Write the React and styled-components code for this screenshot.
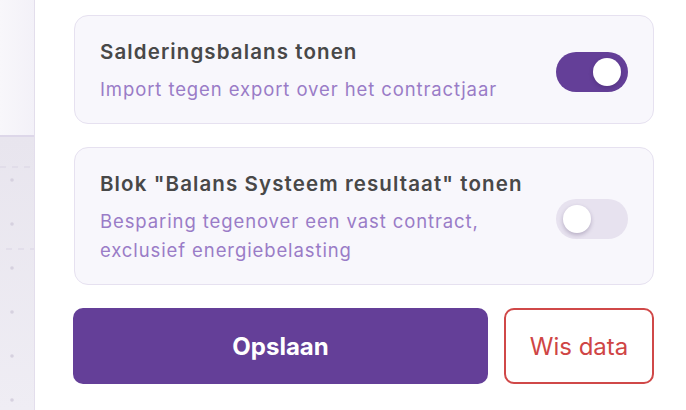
import React, { useState } from 'react';
import styled, { createGlobalStyle } from 'styled-components';

const GlobalStyle = createGlobalStyle`
  html, body {
    margin: 0;
    padding: 0;
    background: #ffffff;
  }
  body {
    font-family: Inter, "Noto Sans", "Liberation Sans", sans-serif;
    -webkit-font-smoothing: antialiased;
  }
`;

const Page = styled.div`
  display: flex;
  width: 686px;
  height: 410px;
  overflow: hidden;
`;

const Backdrop = styled.div`
  width: 34px;
  flex-shrink: 0;
  display: flex;
  flex-direction: column;
  border-right: 1px solid #e3deec;
`;

const BackdropTop = styled.div`
  height: 135px;
  background: linear-gradient(90deg, #f8f7fb 0%, #f3f1f8 100%);
  border-bottom: 2px solid #ddd7e9;
`;

const BackdropChart = styled.div`
  flex: 1;
  background: linear-gradient(180deg, #e8e5ee 0%, #efedf4 100%);

  svg {
    display: block;
  }
`;

const Panel = styled.div`
  flex: 1;
  background: #ffffff;
  padding: 15px 32px 0 39px;
  display: flex;
  flex-direction: column;
  gap: 23px;
`;

const Card = styled.div`
  display: flex;
  align-items: center;
  gap: 26px;
  padding: 24px 25px 19px 25px;
  background: #f8f7fc;
  border: 1.5px solid #e6e1f0;
  border-radius: 14px;
`;

const CardText = styled.div`
  flex: 1;
  min-width: 0;
`;

const Title = styled.div`
  font-size: 20.5px;
  line-height: 24px;
  font-weight: 600;
  letter-spacing: 1.1px;
  white-space: nowrap;
  color: #484848;
`;

const Subtitle = styled.div`
  margin-top: 11px;
  font-size: 18.5px;
  line-height: 29px;
  letter-spacing: 0.9px;
  color: #9a7cc7;
`;

const Track = styled.button`
  position: relative;
  flex-shrink: 0;
  width: 72px;
  height: 40px;
  padding: 0;
  border: none;
  border-radius: 20px;
  cursor: pointer;
  background: ${({ $on }) => ($on ? '#643f98' : '#e7e2ef')};
`;

const Knob = styled.span`
  position: absolute;
  top: 6px;
  left: ${({ $on }) => ($on ? '37px' : '7px')};
  width: 28px;
  height: 28px;
  border-radius: 50%;
  background: #ffffff;
  box-shadow: 0 2px 4px rgba(40, 20, 70, 0.25);
`;

const Actions = styled.div`
  display: flex;
  gap: 16px;
  margin-left: -1px;
`;

const Button = styled.button`
  height: 76px;
  border-radius: 10px;
  font-family: inherit;
  font-size: 24px;
  cursor: pointer;
`;

const SaveButton = styled(Button)`
  flex: 1;
  border: none;
  background: #643f98;
  color: #ffffff;
  font-weight: 700;
`;

const ClearButton = styled(Button)`
  width: 150px;
  background: #ffffff;
  border: 2px solid #d04848;
  color: #cf4545;
  font-weight: 400;
`;

function Toggle({ on, onChange }) {
  return (
    <Track $on={on} onClick={() => onChange(!on)} aria-pressed={on}>
      <Knob $on={on} />
    </Track>
  );
}

function ChartLines() {
  const dots = [43, 87, 131, 175, 219, 263];
  return (
    <svg width="34" height="273" viewBox="0 0 34 273">
      <line x1="0" y1="30" x2="34" y2="30" stroke="#d9d4e3" strokeWidth="1.2" strokeDasharray="6 6" />
      <line x1="6" y1="112" x2="34" y2="112" stroke="#d9d4e3" strokeWidth="1.2" strokeDasharray="6 6" />
      {dots.map((y) => (
        <circle key={y} cx="12" cy={y} r="1.8" fill="#d6d1df" />
      ))}
    </svg>
  );
}

function SettingCard({ title, text, on, onChange }) {
  return (
    <Card>
      <CardText>
        <Title>{title}</Title>
        <Subtitle>{text}</Subtitle>
      </CardText>
      <Toggle on={on} onChange={onChange} />
    </Card>
  );
}

export default function App() {
  const [showBalance, setShowBalance] = useState(true);
  const [showResult, setShowResult] = useState(false);

  return (
    <Page>
      <GlobalStyle />
      <Backdrop>
        <BackdropTop />
        <BackdropChart>
          <ChartLines />
        </BackdropChart>
      </Backdrop>
      <Panel>
        <SettingCard
          title="Salderingsbalans tonen"
          text="Import tegen export over het contractjaar"
          on={showBalance}
          onChange={setShowBalance}
        />
        <SettingCard
          title='Blok "Balans Systeem resultaat" tonen'
          text="Besparing tegenover een vast contract, exclusief energiebelasting"
          on={showResult}
          onChange={setShowResult}
        />
        <Actions>
          <SaveButton>Opslaan</SaveButton>
          <ClearButton>Wis data</ClearButton>
        </Actions>
      </Panel>
    </Page>
  );
}
